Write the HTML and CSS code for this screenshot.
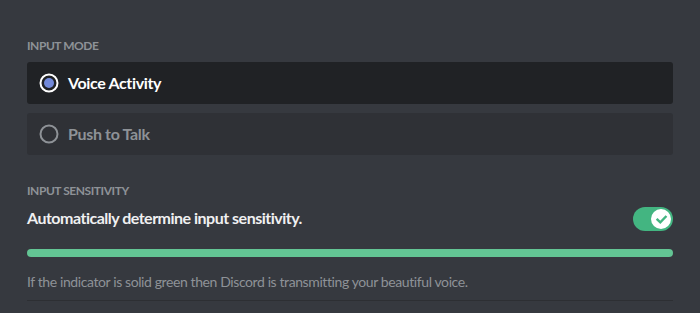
FILE: index.html
```html
<!DOCTYPE html>
<html>
<head>
<meta charset="utf-8">
<link rel="stylesheet" href="styles.css">
</head>
<body>
<div class="page">
  <h5 class="eyebrow">Input Mode</h5>
  <div class="option selected">
    <svg class="radio" width="20" height="20" viewBox="0 0 20 20"><circle cx="10" cy="10" r="8.5" fill="none" stroke="#ffffff" stroke-width="2"/><circle cx="10" cy="10" r="5" fill="#7289da"/></svg>
    <span class="option-label">Voice Activity</span>
  </div>
  <div class="option">
    <svg class="radio" width="20" height="20" viewBox="0 0 20 20"><circle cx="10" cy="10" r="8.5" fill="none" stroke="#8e9297" stroke-width="2"/></svg>
    <span class="option-label">Push to Talk</span>
  </div>

  <h5 class="eyebrow second">Input Sensitivity</h5>
  <div class="switch-row">
    <span class="switch-title">Automatically determine input sensitivity.</span>
    <div class="switch">
      <div class="knob">
        <svg width="13" height="13" viewBox="0 0 12 12"><path d="M2.3 6.2 L4.9 8.7 L9.8 3.6" fill="none" stroke="#43b581" stroke-width="2.2" stroke-linecap="square"/></svg>
      </div>
    </div>
  </div>
  <div class="meter"></div>
  <p class="help">If the indicator is solid green then Discord is transmitting your beautiful voice.</p>
  <div class="divider"></div>
</div>
</body>
</html>
```
FILE: styles.css
```css
html, body {
  margin: 0;
  padding: 0;
  background: #36393f;
  height: 100%;
}
body {
  font-family: Lato, "Noto Sans", sans-serif;
}
.page {
  padding: 38px 27px 0 27px;
}
.eyebrow {
  margin: 0 0 8px 0;
  font-size: 12px;
  line-height: 16px;
  font-weight: 700;
  text-transform: uppercase;
  color: #8e9297;
  letter-spacing: -0.45px;
}
.eyebrow.second {
  margin-top: 28px;
}
.option {
  height: 42px;
  box-sizing: border-box;
  display: flex;
  align-items: center;
  gap: 9px;
  padding: 0 12px;
  border-radius: 3px;
  background: #2f3136;
  margin-bottom: 9px;
}
.option.selected {
  background: #202225;
}
.radio {
  flex: none;
}
.option-label {
  font-size: 16px;
  line-height: 20px;
  font-weight: 700;
  color: #8e9297;
  letter-spacing: -0.35px;
}
.option.selected .option-label {
  color: #ffffff;
}
.switch-row {
  display: flex;
  justify-content: space-between;
  align-items: center;
  height: 24px;
}
.switch-title {
  font-size: 16px;
  line-height: 20px;
  font-weight: 700;
  color: #f0f0f1;
  letter-spacing: -0.5px;
  margin-bottom: 2px;
}
.switch {
  width: 40px;
  height: 24px;
  border-radius: 12px;
  background: #43b581;
  box-sizing: border-box;
  padding: 2px;
  display: flex;
  justify-content: flex-end;
}
.knob {
  width: 20px;
  height: 20px;
  border-radius: 50%;
  background: #ffffff;
  display: flex;
  align-items: center;
  justify-content: center;
}
.meter {
  margin-top: 18px;
  height: 8px;
  border-radius: 4px;
  background: #63c594;
}
.help {
  margin: 16px 0 0 0;
  font-size: 14px;
  line-height: 18px;
  color: #8e9297;
  letter-spacing: -0.4px;
}
.divider {
  margin-top: 9px;
  height: 1px;
  background: #2d2f33;
}
```
